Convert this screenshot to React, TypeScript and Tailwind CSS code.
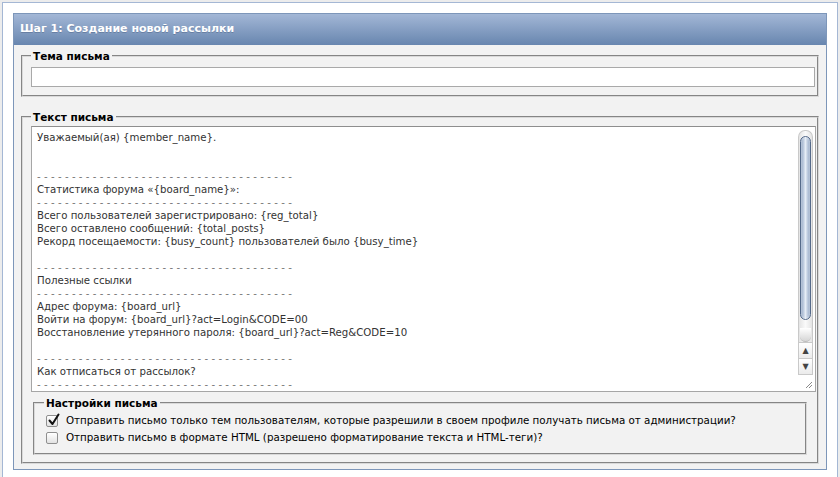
import { ReactNode } from 'react'

const dash = '-'.repeat(37)

const body = [
  'Уважаемый(ая) {member_name}.',
  '',
  '',
  dash,
  'Статистика форума «{board_name}»:',
  dash,
  'Всего пользователей зарегистрировано: {reg_total}',
  'Всего оставлено сообщений: {total_posts}',
  'Рекорд посещаемости: {busy_count} пользователей было {busy_time}',
  '',
  dash,
  'Полезные ссылки',
  dash,
  'Адрес форума: {board_url}',
  'Войти на форум: {board_url}?act=Login&CODE=00',
  'Восстановление утерянного пароля: {board_url}?act=Reg&CODE=10',
  '',
  dash,
  'Как отписаться от рассылок?',
  dash,
]

const font = "font-['DejaVu_Sans',_'Noto_Sans',_sans-serif]"

function Legend({ children }: { children: ReactNode }) {
  return <legend className="px-[2px] text-[10.5px] leading-[14px] font-bold text-black">{children}</legend>
}

function Checkbox({ checked }: { checked?: boolean }) {
  return (
    <span className="relative block w-[12px] h-[12px] shrink-0 rounded-[2px] border border-[#8f8f8f] bg-gradient-to-b from-white to-[#e2e2e2] shadow-[inset_0_1px_0_#fff]">
      {checked && (
        <svg className="absolute left-[1px] top-[-3px]" width="12" height="13" viewBox="0 0 12 13">
          <path d="M1.5 7.5 L4.5 11 L10.5 1.5" fill="none" stroke="#111" strokeWidth="2" strokeLinecap="round" strokeLinejoin="round" />
        </svg>
      )}
    </span>
  )
}

function Scrollbar() {
  return (
    <div className="flex flex-col w-[15px] mt-[3px] mr-[2px] shrink-0">
      <div className="flex flex-col h-[212px] border border-[#c9c9c9] border-b-0 rounded-t-[7px] bg-gradient-to-r from-[#e4e4e4] via-[#fafafa] to-[#e4e4e4]">
        <div className="mt-[5px] mx-[1px] h-[184px] rounded-full border border-[#556a8a] bg-gradient-to-r from-[#8ea3c2] via-[#e6edf6] to-[#8ea3c2] shadow-[inset_0_0_2px_#fff]" />
        <div className="mt-auto mx-[1px] h-[14px] rounded-b-full bg-gradient-to-b from-[#ffffff] to-[#d6d6d6] border-b border-[#bdbdbd]" />
      </div>
      <div className="h-[17px] border border-[#c9c9c9] bg-gradient-to-b from-white to-[#ebebeb] flex items-center justify-center text-[8px] leading-none text-[#444]">▲</div>
      <div className="h-[16px] border border-t-0 border-[#c9c9c9] bg-gradient-to-b from-white to-[#ebebeb] flex items-center justify-center text-[8px] leading-none text-[#444]">▼</div>
      <div className="flex-1 flex items-end justify-end pb-[2px]">
        <svg width="8" height="8" viewBox="0 0 8 8">
          <path d="M1 7 L7 1 M4 7 L7 4" stroke="#8a8a8a" strokeWidth="1" />
        </svg>
      </div>
    </div>
  )
}

export default function App() {
  return (
    <div className={`min-h-screen bg-[#ececec] px-[2px] pt-[2px] ${font}`}>
      <div className="border-l border-t border-r border-[#a4b7d4] bg-white px-[10px] pt-[10px] pb-[8px]">
        <div className="border border-[#7d96b9] bg-[#f2f2f2]">
          <div className="h-[31px] px-[6px] flex items-center bg-gradient-to-b from-[#a3b7d6] to-[#6886af] text-white font-bold text-[11px] [text-shadow:0_1px_0_rgba(60,80,110,0.35)]">
            Шаг 1: Создание новой рассылки
          </div>

          <div className="px-[7px] pt-[4px] pb-[5px]">
            <fieldset className="border-2 [border-style:groove] border-[#d9d9d9] pl-[8px] pr-[2px] pt-[4px] pb-[8px]">
              <Legend>Тема письма</Legend>
              <input type="text" className="block w-full h-[20px] bg-white border border-[#a9a9a9] outline-none" />
            </fieldset>

            <fieldset className="mt-[13px] border-2 [border-style:groove] border-[#d9d9d9] pl-[8px] pr-[1px] pt-[2px] pb-[7px]">
              <Legend>Текст письма</Legend>
              <div className="flex h-[266px] bg-white border border-[#a6a6a6] border-t-[#8e8e8e]">
                <div className="flex-1 overflow-hidden pl-[5px] pt-[4px] text-[10.2px] leading-[13px] text-[#333] whitespace-pre">
                  {body.map((line, i) =>
                    line === dash ? (
                      <div key={i} className="tracking-[3.3px] text-[#777]">{line}</div>
                    ) : (
                      <div key={i} className="h-[13px]">{line}</div>
                    )
                  )}
                </div>
                <Scrollbar />
              </div>

              <fieldset className="mt-[4px] ml-[2px] mr-[9px] border-2 [border-style:groove] border-[#d9d9d9] pl-[9px] pt-[2px] pb-[7px]">
                <Legend>Настройки письма</Legend>
                <div className="ml-[2px] text-[10.3px] text-black">
                  <label className="flex items-center gap-[8px] h-[17px]">
                    <Checkbox checked />
                    <span>Отправить письмо только тем пользователям, которые разрешили в своем профиле получать письма от администрации?</span>
                  </label>
                  <label className="flex items-center gap-[8px] h-[17px]">
                    <Checkbox />
                    <span>Отправить письмо в формате HTML (разрешено форматирование текста и HTML-теги)?</span>
                  </label>
                </div>
              </fieldset>
            </fieldset>
          </div>
        </div>
      </div>
    </div>
  )
}
